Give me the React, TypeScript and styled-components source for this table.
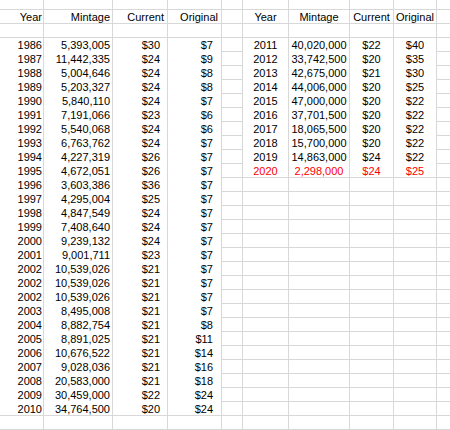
import React from "react";
import styled, { createGlobalStyle } from "styled-components";

const Global = createGlobalStyle`
  html, body { margin: 0; padding: 0; background: #ffffff; }
  body { width: 450px; height: 430px; overflow: hidden; }
`;

const GRID = "#d8d8d8";

const Sheet = styled.div`
  display: flex;
  flex-direction: column;
  width: 450px;
  height: 430px;
  overflow: hidden;
  font-family: "Liberation Sans", Arial, sans-serif;
  font-size: 11px;
  color: #000;
`;

const Row = styled.div<{ $h: number }>`
  display: grid;
  grid-template-columns: 44px 69px 55px 54px 21px 46px 61px 44px 43px 1fr;
  height: ${(p) => p.$h}px;
  flex: none;
`;

const Cell = styled.div<{
  $align?: "left" | "right" | "center";
  $pr?: number;
  $line?: boolean;
  $red?: boolean;
  $last?: boolean;
}>`
  box-sizing: border-box;
  height: 100%;
  line-height: 14px;
  white-space: nowrap;
  overflow: hidden;
  text-align: ${(p) => p.$align ?? "right"};
  padding-right: ${(p) => p.$pr ?? 0}px;
  border-right: ${(p) => (p.$last ? "none" : `1px solid ${GRID}`)};
  border-bottom: ${(p) => (p.$line === false ? "none" : `1px solid ${GRID}`)};
  color: ${(p) => (p.$red ? "#ff0000" : "#000")};
`;

type Rec = [string, string, string, string];

const left: Rec[] = [
  ["1986", "5,393,005", "$30", "$7"],
  ["1987", "11,442,335", "$24", "$9"],
  ["1988", "5,004,646", "$24", "$8"],
  ["1989", "5,203,327", "$24", "$8"],
  ["1990", "5,840,110", "$24", "$7"],
  ["1991", "7,191,066", "$23", "$6"],
  ["1992", "5,540,068", "$24", "$6"],
  ["1993", "6,763,762", "$24", "$7"],
  ["1994", "4,227,319", "$26", "$7"],
  ["1995", "4,672,051", "$26", "$7"],
  ["1996", "3,603,386", "$36", "$7"],
  ["1997", "4,295,004", "$25", "$7"],
  ["1998", "4,847,549", "$24", "$7"],
  ["1999", "7,408,640", "$24", "$7"],
  ["2000", "9,239,132", "$24", "$7"],
  ["2001", "9,001,711", "$23", "$7"],
  ["2002", "10,539,026", "$21", "$7"],
  ["2002", "10,539,026", "$21", "$7"],
  ["2002", "10,539,026", "$21", "$7"],
  ["2003", "8,495,008", "$21", "$7"],
  ["2004", "8,882,754", "$21", "$8"],
  ["2005", "8,891,025", "$21", "$11"],
  ["2006", "10,676,522", "$21", "$14"],
  ["2007", "9,028,036", "$21", "$16"],
  ["2008", "20,583,000", "$21", "$18"],
  ["2009", "30,459,000", "$22", "$24"],
  ["2010", "34,764,500", "$20", "$24"],
];

const right: Rec[] = [
  ["2011", "40,020,000", "$22", "$40"],
  ["2012", "33,742,500", "$20", "$35"],
  ["2013", "42,675,000", "$21", "$30"],
  ["2014", "44,006,000", "$20", "$25"],
  ["2015", "47,000,000", "$20", "$22"],
  ["2016", "37,701,500", "$20", "$22"],
  ["2017", "18,065,500", "$20", "$22"],
  ["2018", "15,700,000", "$20", "$22"],
  ["2019", "14,863,000", "$24", "$22"],
  ["2020", "2,298,000", "$24", "$25"],
];

const EmptyRow: React.FC<{ h: number }> = ({ h }) => (
  <Row $h={h}>
    {Array.from({ length: 10 }).map((_, i) => (
      <Cell key={i} $last={i === 9} />
    ))}
  </Row>
);

export default function App() {
  return (
    <Sheet>
      <Global />
      <EmptyRow h={10} />
      <Row $h={14}>
        <Cell $pr={1}>Year</Cell>
        <Cell $pr={2}>Mintage</Cell>
        <Cell $pr={3}>Current</Cell>
        <Cell $pr={3}>Original</Cell>
        <Cell />
        <Cell $align="center">Year</Cell>
        <Cell $align="center">Mintage</Cell>
        <Cell $align="center">Current</Cell>
        <Cell $align="center">Original</Cell>
        <Cell $last />
      </Row>
      <EmptyRow h={14} />
      {left.map((l, i) => {
        const r = right[i];
        const lLine = i === left.length - 1;
        const rLine = !r || i === right.length - 1;
        const red = r && r[0] === "2020";
        return (
          <Row $h={14} key={i}>
            <Cell $pr={1} $line={lLine}>{l[0]}</Cell>
            <Cell $pr={2} $line={lLine}>{l[1]}</Cell>
            <Cell $pr={7} $line={lLine}>{l[2]}</Cell>
            <Cell $pr={8} $line={lLine}>{l[3]}</Cell>
            <Cell />
            <Cell $align="center" $line={rLine} $red={red}>{r ? r[0] : ""}</Cell>
            <Cell $align="center" $line={rLine} $red={red}>{r ? r[1] : ""}</Cell>
            <Cell $align="center" $line={rLine} $red={red}>{r ? r[2] : ""}</Cell>
            <Cell $align="center" $line={rLine} $red={red}>{r ? r[3] : ""}</Cell>
            <Cell $last />
          </Row>
        );
      })}
      <EmptyRow h={14} />
      <EmptyRow h={14} />
    </Sheet>
  );
}
